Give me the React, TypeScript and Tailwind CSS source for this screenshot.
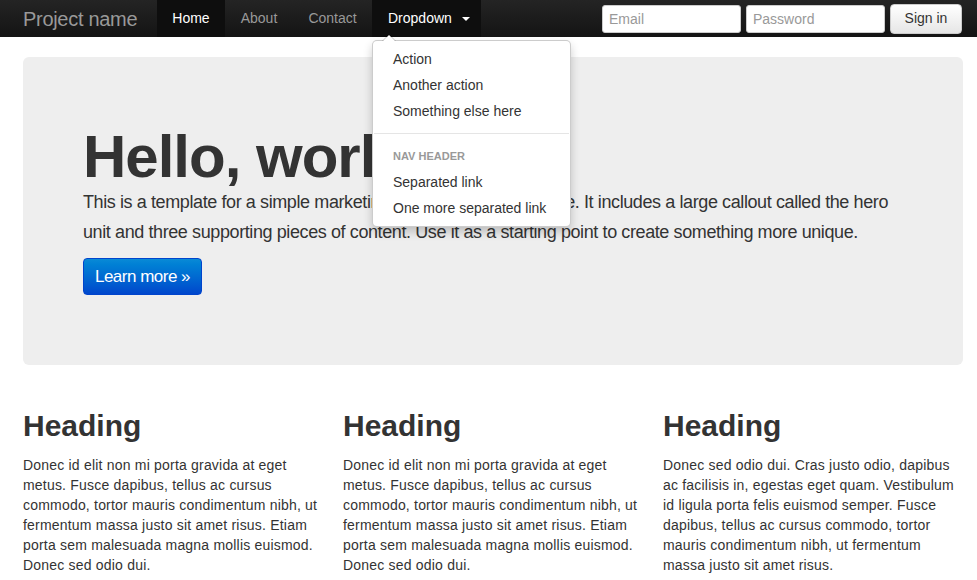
const navLinks = [
  { label: 'Home', width: 'w-[68px]' },
  { label: 'About', width: 'w-[68px]' },
  { label: 'Contact', width: 'w-[79px]' },
];

const menuItems = ['Action', 'Another action', 'Something else here'];

const columns = [
  'Donec id elit non mi porta gravida at eget metus. Fusce dapibus, tellus ac cursus commodo, tortor mauris condimentum nibh, ut fermentum massa justo sit amet risus. Etiam porta sem malesuada magna mollis euismod. Donec sed odio dui.',
  'Donec id elit non mi porta gravida at eget metus. Fusce dapibus, tellus ac cursus commodo, tortor mauris condimentum nibh, ut fermentum massa justo sit amet risus. Etiam porta sem malesuada magna mollis euismod. Donec sed odio dui.',
  'Donec sed odio dui. Cras justo odio, dapibus ac facilisis in, egestas eget quam. Vestibulum id ligula porta felis euismod semper. Fusce dapibus, tellus ac cursus commodo, tortor mauris condimentum nibh, ut fermentum massa justo sit amet risus.',
];

const DropdownMenu = () => (
  <div className="absolute left-0 top-[40px] z-20 w-[199px] rounded-[5px] border border-black/20 bg-white py-[5px] text-[14px] leading-5 text-[#333] shadow-[0_5px_10px_rgba(0,0,0,0.2)]">
    {/* caret pointing at the toggle */}
    <span className="absolute -top-[7px] left-[9px] h-0 w-0 border-x-[7px] border-b-[7px] border-x-transparent border-b-black/20"></span>
    <span className="absolute -top-[6px] left-[10px] h-0 w-0 border-x-[6px] border-b-[6px] border-x-transparent border-b-white"></span>
    {menuItems.map((item) => (
      <div key={item} className="px-5 py-[3px] whitespace-nowrap">{item}</div>
    ))}
    <div className="mx-px my-[9px] h-px bg-[#e5e5e5]"></div>
    <div className="px-5 py-[3px] text-[11px] font-bold uppercase text-[#999]">Nav header</div>
    <div className="px-5 py-[3px]">Separated link</div>
    <div className="px-5 py-[3px] whitespace-nowrap">One more separated link</div>
  </div>
);

const Navbar = () => (
  <div className="h-[37px] bg-gradient-to-b from-[#242424] to-[#141414]">
    <div className="ml-[23px] flex h-full w-[940px] items-center">
      <span className="w-[134px] shrink-0 whitespace-nowrap text-[20px] tracking-[-0.3px] text-[#999]">Project name</span>
      <ul className="flex h-full text-[14px]">
        {navLinks.map((link, i) => (
          <li
            key={link.label}
            className={`flex h-full items-center justify-center ${link.width} ${i === 0 ? 'bg-[#0e0e0e] text-white' : 'text-[#999]'}`}
          >
            {link.label}
          </li>
        ))}
        <li className="relative flex h-full w-[109px] items-center bg-[#0e0e0e] pl-4 text-white">
          Dropdown
          <span className="ml-[10px] mt-px h-0 w-0 border-x-4 border-t-4 border-x-transparent border-t-white"></span>
          <DropdownMenu />
        </li>
      </ul>
      <form className="ml-auto flex items-center gap-[5px] pr-px">
        <input
          placeholder="Email"
          className="h-[28px] w-[139px] rounded-[3px] border border-[#ccc] bg-white px-[6px] text-[14px] text-[#555] placeholder:text-[#999] outline-none"
        />
        <input
          placeholder="Password"
          className="h-[28px] w-[139px] rounded-[3px] border border-[#ccc] bg-white px-[6px] text-[14px] text-[#555] placeholder:text-[#999] outline-none"
        />
        <button
          type="button"
          className="h-[30px] w-[72px] rounded-[4px] border border-[#ccc] bg-gradient-to-b from-white to-[#e6e6e6] text-[14px] text-[#333]"
        >
          Sign in
        </button>
      </form>
    </div>
  </div>
);

export default function App() {
  return (
    <div className="min-h-screen bg-white font-['Liberation_Sans',Arial,sans-serif] text-[#333]">
      <Navbar />
      <div className="ml-[23px] w-[940px] pt-5">
        <div className="rounded-[6px] bg-[#eee] px-[60px] pt-[70px] pb-[70px]">
          <h1 className="text-[60px] font-bold leading-none tracking-[-1px]">Hello, world!</h1>
          <p className="mb-[11px] text-[18px] leading-[30px] tracking-[-0.4px]">
            This is a template for a simple marketing or informational website. It includes a large callout called the hero unit and three supporting pieces of content. Use it as a starting point to create something more unique.
          </p>
          <button
            type="button"
            className="h-[37px] w-[119px] rounded-[4px] border border-[#0044cc] bg-gradient-to-b from-[#0a8ad6] to-[#0046cc] text-[17px] tracking-[-0.5px] text-white"
          >
            Learn more »
          </button>
        </div>
        <div className="mt-[41px] grid grid-cols-3 gap-5">
          {columns.map((text, i) => (
            <div key={i}>
              <h2 className="mb-[9px] text-[30px] font-bold leading-10">Heading</h2>
              <p className="text-[14px] leading-5 tracking-[0.2px]">{text}</p>
            </div>
          ))}
        </div>
      </div>
    </div>
  );
}
